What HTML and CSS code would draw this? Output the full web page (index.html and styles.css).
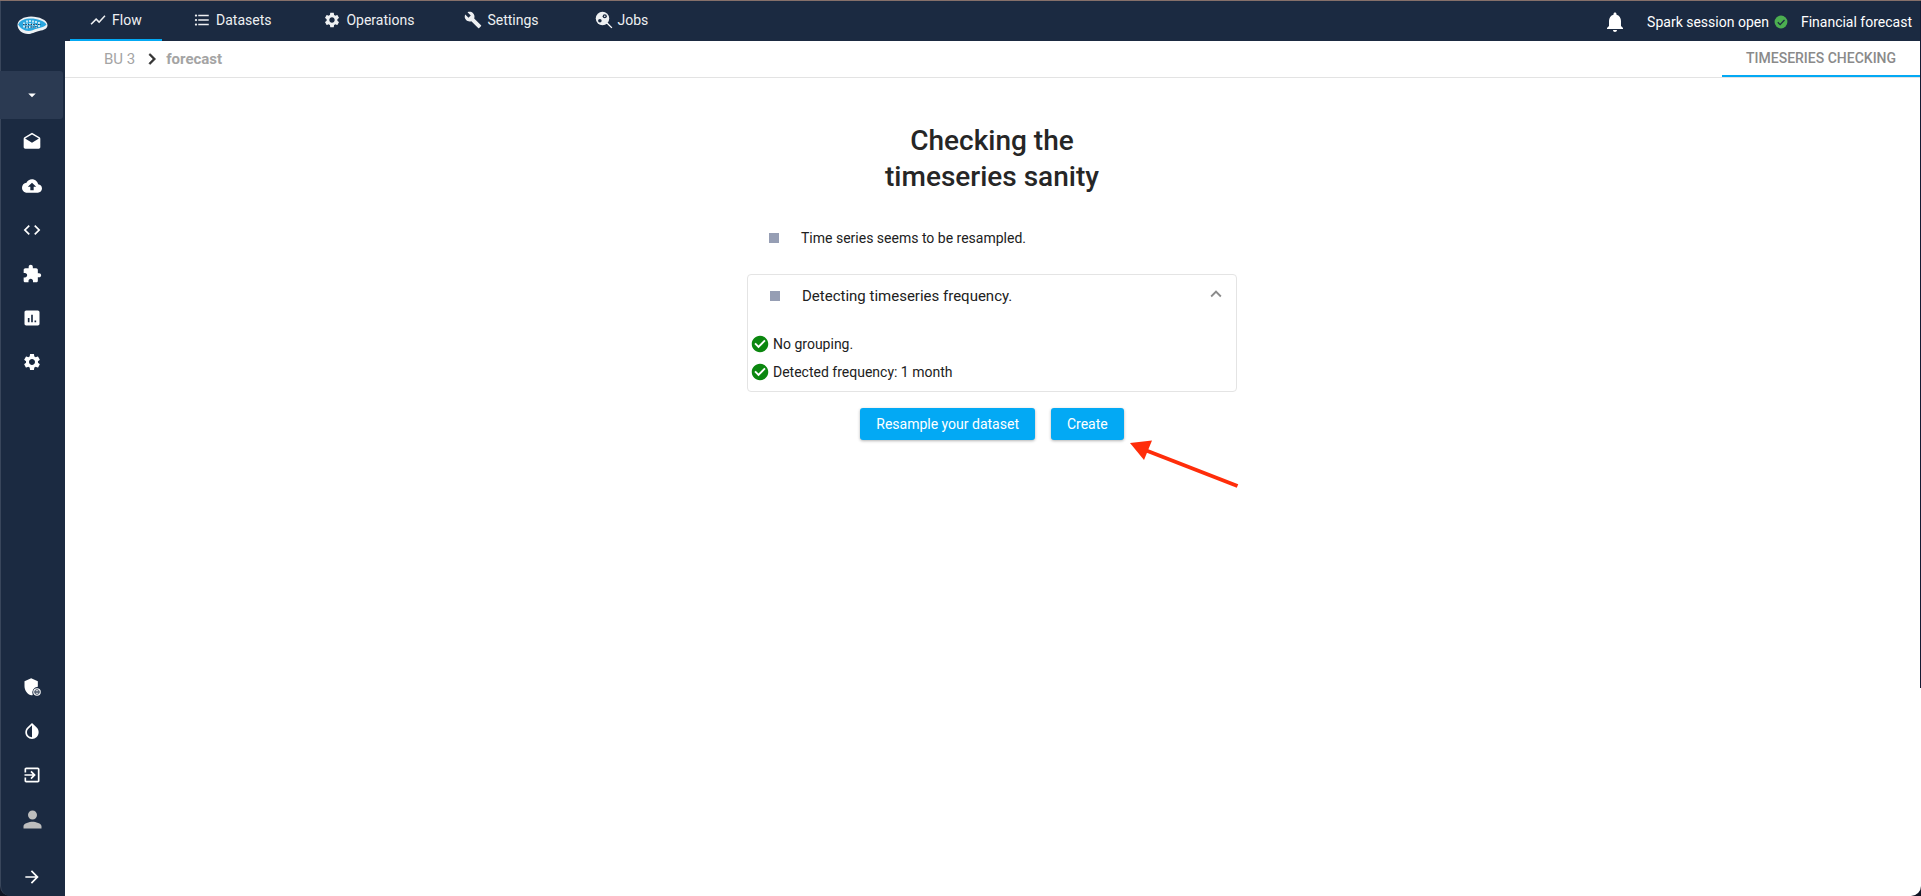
FILE: index.html
```html
<!DOCTYPE html>
<html lang="en">
<head>
<meta charset="utf-8">
<title>Timeseries checking</title>
<link rel="stylesheet" href="styles.css">
</head>
<body>
<div class="window">
  <div class="topline"></div>
  <div class="app">
    <aside class="sidebar">
      <div class="logo">
        <svg width="31" height="19" viewBox="0 0 31 19">
          <path d="M.5 9C.5 4 7 .5 14 .5c8 0 16.500 3.500 16.500 8.500 0 3.500-3 5-8.500 6-5 1-7 3-11 3-5.500 0-10.500-4-10.500-9z" fill="#eef2f5"/>
          <path d="M1.500 8C2.500 4.500 8 2.500 14 2.500c6 0 13.500 2.500 15.500 6-2 2.500-5 3-9 4-4 1-6 2.500-9 2.500-4 0-9-3-10.500-7z" fill="#2ba6de"/>
          <path d="M7 6.500v5M10 4.500v8M13 4v9M16 4.500v7M19 5v7M22 6v5" stroke="#fff" stroke-width="1.400" stroke-dasharray="2 1"/>
          <path d="M6 8.500h18M8 11h13" stroke="#1b2a41" stroke-width=".8" stroke-dasharray="1.500 1"/>
        </svg>
      </div>
      <div class="side-active">
        <svg class="ic18" viewBox="0 0 24 24"><path d="M7 10l5 5 5-5z"/></svg>
      </div>
      <nav class="side-group">
        <div class="side-item"><svg class="ic20" viewBox="0 0 24 24"><path d="M21.990 8c0-.72-.37-1.350-.94-1.700L12 1 2.950 6.300C2.380 6.650 2 7.280 2 8v10c0 1.100.9 2 2 2h16c1.100 0 2-.9 2-2l-.01-10zM12 13L3.740 7.840 12 3l8.260 4.840L12 13z"/></svg></div>
        <div class="side-item"><svg class="ic20" viewBox="0 0 24 24"><path d="M19.350 10.040C18.670 6.590 15.640 4 12 4 9.110 4 6.600 5.640 5.350 8.040 2.340 8.360 0 10.910 0 14c0 3.310 2.690 6 6 6h13c2.760 0 5-2.240 5-5 0-2.640-2.050-4.780-4.650-4.960zM14 13v4h-4v-4H7l5-5 5 5h-3z"/></svg></div>
        <div class="side-item"><svg class="ic20" viewBox="0 0 24 24"><path d="M9.400 16.600L4.800 12l4.600-4.600L8 6l-6 6 6 6 1.400-1.400zm5.200 0l4.600-4.600-4.600-4.600L16 6l6 6-6 6-1.400-1.400z"/></svg></div>
        <div class="side-item"><svg class="ic20" viewBox="0 0 24 24"><path d="M20.500 11H19V7c0-1.100-.9-2-2-2h-4V3.500C13 2.120 11.880 1 10.500 1S8 2.120 8 3.500V5H4c-1.100 0-1.990.9-1.990 2v3.800H3.500c1.490 0 2.700 1.210 2.700 2.700s-1.210 2.700-2.700 2.700H2V20c0 1.100.9 2 2 2h3.800v-1.500c0-1.490 1.210-2.700 2.700-2.700 1.490 0 2.700 1.210 2.700 2.700V22H17c1.100 0 2-.9 2-2v-4h1.500c1.380 0 2.500-1.120 2.500-2.500S21.880 11 20.500 11z"/></svg></div>
        <div class="side-item"><svg class="ic20" viewBox="0 0 24 24"><path d="M19 3H5c-1.100 0-2 .9-2 2v14c0 1.100.9 2 2 2h14c1.100 0 2-.9 2-2V5c0-1.100-.9-2-2-2zM9 17H7v-5h2v5zm4 0h-2V8h2v9zm4 0h-2v-2h2v2z"/></svg></div>
        <div class="side-item"><svg class="ic20" viewBox="0 0 24 24"><path d="M19.140 12.940c.04-.3.06-.61.06-.94 0-.32-.02-.64-.07-.94l2.030-1.580c.18-.14.23-.41.12-.61l-1.920-3.320c-.12-.22-.37-.29-.59-.22l-2.390.96c-.5-.38-1.030-.7-1.620-.94l-.36-2.540c-.04-.24-.24-.41-.48-.41h-3.840c-.24 0-.43.17-.47.41l-.36 2.540c-.59.24-1.130.57-1.620.94l-2.390-.96c-.22-.08-.47 0-.59.22L2.740 8.870c-.12.21-.08.47.12.61l2.030 1.580c-.05.3-.09.63-.09.94s.02.64.07.94l-2.030 1.580c-.18.14-.23.41-.12.61l1.920 3.320c.12.22.37.29.59.22l2.390-.96c.5.38 1.030.7 1.620.94l.36 2.540c.05.24.24.41.48.41h3.840c.24 0 .44-.17.47-.41l.36-2.540c.59-.24 1.130-.56 1.620-.94l2.390.96c.22.08.47 0 .59-.22l1.920-3.320c.12-.22.07-.47-.12-.61l-2.010-1.580zM12 15.600c-1.980 0-3.600-1.620-3.600-3.600s1.620-3.600 3.600-3.600 3.600 1.620 3.600 3.600-1.620 3.600-3.600 3.600z"/></svg></div>
      </nav>
      <nav class="side-group side-bottom">
        <div class="side-item"><svg class="ic20" viewBox="0 0 24 24"><path d="M11 1.500L3 5v6c0 5 3.400 9.800 8.500 11 .5-.1 1-.3 1.400-.5A7 7 0 0 1 19 11.700V5l-8-3.500z"/><circle cx="18" cy="18" r="4.500" fill="#fff"/><path d="M15.500 18h5" stroke="#1b2a41" stroke-width="1.500"/><circle cx="18" cy="18" r="2.800" fill="none" stroke="#1b2a41" stroke-width="1"/></svg></div>
        <div class="side-item"><svg class="ic20" viewBox="0 0 24 24"><path d="M17.660 7.930L12 2.270 6.340 7.930c-3.120 3.120-3.120 8.190 0 11.310C7.900 20.800 9.950 21.580 12 21.580s4.100-.78 5.660-2.340c3.120-3.120 3.120-8.190 0-11.310zM12 19.590c-1.600 0-3.110-.62-4.240-1.760C6.620 16.690 6 15.190 6 13.590s.62-3.110 1.760-4.240L12 5.100v14.490z"/></svg></div>
        <div class="side-item"><svg class="ic20" viewBox="0 0 24 24"><path d="M10.090 15.590L11.500 17l5-5-5-5-1.410 1.410L12.670 11H3v2h9.670l-2.580 2.590zM19 3H5c-1.110 0-2 .9-2 2v4h2V5h14v14H5v-4H3v4c0 1.100.89 2 2 2h14c1.100 0 2-.9 2-2V5c0-1.100-.9-2-2-2z"/></svg></div>
        <div class="side-item"><svg class="ic-person" viewBox="0 0 24 24"><path d="M12 12c2.210 0 4-1.790 4-4s-1.790-4-4-4-4 1.790-4 4 1.790 4 4 4zm0 2c-2.670 0-8 1.340-8 4v2h16v-2c0-2.660-5.330-4-8-4z"/></svg></div>
        <div class="side-item side-collapse"><svg class="ic20" viewBox="0 0 24 24"><path d="M12 4l-1.410 1.410L16.170 11H4v2h12.170l-5.580 5.590L12 20l8-8z"/></svg></div>
      </nav>
    </aside>
    <div class="main">
      <header class="topbar">
        <nav class="tabs">
          <a class="tab tab-flow active"><svg class="ic18" viewBox="0 0 24 24"><path d="M3.500 18.490l6-6.010 4 4L22 6.920l-1.410-1.410-7.090 7.970-4-4L2 16.990z"/></svg>Flow</a>
          <a class="tab tab-datasets"><svg class="ic18" viewBox="0 0 24 24"><path d="M4 10.500c-.83 0-1.500.67-1.500 1.500s.67 1.500 1.500 1.500 1.500-.67 1.500-1.500-.67-1.500-1.500-1.500zm0-6c-.83 0-1.500.67-1.500 1.500S3.170 7.500 4 7.500 5.500 6.830 5.500 6 4.830 4.500 4 4.500zm0 12c-.83 0-1.500.68-1.500 1.500s.68 1.500 1.500 1.500 1.500-.68 1.500-1.500-.67-1.500-1.500-1.500zM7 19h14v-2H7v2zm0-6h14v-2H7v2zm0-8v2h14V5H7z"/></svg>Datasets</a>
          <a class="tab tab-ops"><svg class="ic18" viewBox="0 0 24 24"><path d="M19.140 12.940c.04-.3.06-.61.06-.94 0-.32-.02-.64-.07-.94l2.030-1.580c.18-.14.23-.41.12-.61l-1.920-3.320c-.12-.22-.37-.29-.59-.22l-2.390.96c-.5-.38-1.030-.7-1.620-.94l-.36-2.540c-.04-.24-.24-.41-.48-.41h-3.840c-.24 0-.43.17-.47.41l-.36 2.540c-.59.24-1.130.57-1.620.94l-2.390-.96c-.22-.08-.47 0-.59.22L2.740 8.870c-.12.21-.08.47.12.61l2.030 1.580c-.05.3-.09.63-.09.94s.02.64.07.94l-2.030 1.580c-.18.14-.23.41-.12.61l1.920 3.320c.12.22.37.29.59.22l2.390-.96c.5.38 1.030.7 1.620.94l.36 2.540c.05.24.24.41.48.41h3.840c.24 0 .44-.17.47-.41l.36-2.540c.59-.24 1.130-.56 1.620-.94l2.390.96c.22.08.47 0 .59-.22l1.920-3.320c.12-.22.07-.47-.12-.61l-2.010-1.580zM12 15.600c-1.980 0-3.600-1.620-3.600-3.600s1.620-3.600 3.600-3.600 3.600 1.620 3.600 3.600-1.620 3.600-3.600 3.600z"/></svg>Operations</a>
          <a class="tab tab-settings"><svg class="ic18" viewBox="0 0 24 24"><path d="M22.700 19l-9.100-9.100c.9-2.300.4-5-1.500-6.900-2-2-5-2.400-7.400-1.300L9 6 6 9 1.600 4.700C.4 7.100.9 10.100 2.900 12.100c1.900 1.900 4.600 2.400 6.900 1.500l9.100 9.100c.4.4 1 .4 1.400 0l2.300-2.300c.5-.4.500-1.100.1-1.400z"/></svg>Settings</a>
          <a class="tab tab-jobs"><svg class="ic18" viewBox="0 0 24 24"><circle cx="10" cy="10" r="9"/><path d="M16 16l6.500 6.500" stroke="#fff" stroke-width="1.800"/><circle cx="13" cy="7" r="2.800" fill="#1b2a41"/><circle cx="6.500" cy="13" r="2.400" fill="#1b2a41"/><circle cx="13" cy="7" r="1" fill="#fff"/></svg>Jobs</a>
        </nav>
        <div class="status">
          <svg class="ic-bell" viewBox="0 0 24 24"><path d="M12 22c1.100 0 2-.9 2-2h-4c0 1.100.89 2 2 2zm6-6v-5c0-3.070-1.640-5.640-4.500-6.320V4c0-.83-.67-1.500-1.500-1.500s-1.500.67-1.500 1.500v.68C7.630 5.360 6 7.920 6 11v5l-2 2v1h16v-1l-2-2z"/></svg>
          <span class="spark">Spark session open</span>
          <svg class="ic-ok" viewBox="0 0 24 24"><circle cx="12" cy="12" r="11" fill="#4caf50"/><path d="M6.500 12.500l4 4 7.500-8" fill="none" stroke="#1b2a41" stroke-width="2.200"/></svg>
          <span class="project">Financial forecast</span>
        </div>
      </header>
      <div class="subbar">
        <div class="crumbs">
          <span class="crumb">BU 3</span>
          <svg class="chev" viewBox="0 0 24 24"><path d="M10 6L8.590 7.410 13.170 12l-4.580 4.590L10 18l6-6z" stroke="currentColor" stroke-width=".6"/></svg>
          <span class="crumb crumb-current">forecast</span>
        </div>
        <div class="step-tab">TIMESERIES CHECKING</div>
      </div>
      <main class="content">
        <h1 class="title">Checking the<br>timeseries sanity</h1>
        <div class="check-line">
          <span class="square"></span>
          <span>Time series seems to be resampled.</span>
        </div>
        <section class="card">
          <div class="card-head">
            <span class="square"></span>
            <span class="card-title">Detecting timeseries frequency.</span>
            <svg class="ic-expand" viewBox="0 0 24 24"><path d="M12 8l-6 6 1.410 1.410L12 10.830l4.590 4.580L18 14z"/></svg>
          </div>
          <div class="card-row card-row-first"><svg class="ic-check" viewBox="0 0 24 24"><path d="M12 1C5.930 1 1 5.930 1 12s4.930 11 11 11 11-4.930 11-11S18.070 1 12 1zm-2 16.500L4.500 12l1.800-1.800 3.700 3.700 7.700-7.700 1.800 1.800-9.500 9.500z"/></svg>No grouping.</div>
          <div class="card-row"><svg class="ic-check" viewBox="0 0 24 24"><path d="M12 1C5.930 1 1 5.930 1 12s4.930 11 11 11 11-4.930 11-11S18.070 1 12 1zm-2 16.500L4.500 12l1.800-1.800 3.700 3.700 7.700-7.700 1.800 1.800-9.500 9.500z"/></svg>Detected frequency: 1 month</div>
        </section>
        <div class="actions">
          <button class="btn" type="button">Resample your dataset</button>
          <button class="btn" type="button">Create</button>
        </div>
      </main>
    </div>
  </div>
  <div class="edge-line"></div>
  <svg class="annotation" width="112" height="52" viewBox="0 0 112 52">
    <path d="M109.500 48L17 12" stroke="#ff2d0a" stroke-width="4" fill="none"/>
    <path d="M2 5L24 2.500 16 22z" fill="#ff2d0a"/>
  </svg>
</div>
</body>
</html>
```

FILE: styles.css
```css
* { box-sizing: border-box; }
html, body { margin: 0; height: 100%; }
body {
  background: #0f1524;
  font-family: Roboto, "Liberation Sans", sans-serif;
  overflow: hidden;
}
svg { display: block; fill: currentColor; flex: none; }

.window {
  position: relative;
  width: 1921px;
  height: 896px;
  display: flex;
  flex-direction: column;
}
.topline { height: 1px; background: #86706a; flex: none; }
.app { flex: 1; display: flex; min-height: 0; }

.sidebar {
  width: 65px;
  flex: none;
  display: flex;
  flex-direction: column;
  background: #1b2a41;
  border-left: 1px solid #39465b;
  border-bottom-left-radius: 10px;
  color: #fff;
}
.logo { height: 70px; display: flex; justify-content: center; padding: 15px 2px 0 0; }
.side-active {
  height: 48px;
  width: 63px;
  margin-left: -1px;
  background: #2b3a52;
  border-radius: 0 3px 3px 0;
  display: flex;
  align-items: center;
  justify-content: center;
}
.side-group { display: flex; flex-direction: column; margin-top: 1px; }
.side-item { height: 44px; display: flex; align-items: center; justify-content: center; padding-right: 2px; }
.side-bottom { margin-top: auto; }
.side-collapse { height: 39px; margin-top: 16px; }
.ic18 { width: 18px; height: 18px; }
.ic20 { width: 20px; height: 20px; }
.ic-person { width: 27px; height: 27px; color: #bdbdbd; }

.main { flex: 1; display: flex; flex-direction: column; background: #fff; min-width: 0; border-bottom-right-radius: 10px; }

.topbar {
  height: 40px;
  flex: none;
  display: flex;
  justify-content: space-between;
  background: #1b2a41;
  color: #fff;
  font-size: 14px;
}
.tabs { display: flex; padding-left: 5px; }
.tab {
  display: flex;
  align-items: center;
  gap: 5px;
  height: 40px;
  color: #eef0f2;
  border-bottom: 2px solid transparent;
}
.tab-flow { width: 92px; padding-left: 19px; }
.tab.active { border-bottom-color: #03a9f4; }
.tab-datasets { margin-left: 31px; }
.tab-ops { margin-left: 52px; }
.tab-settings { margin-left: 50px; }
.tab-jobs { margin-left: 56px; }

.status { display: flex; align-items: center; padding: 1px 9px 0 0; }
.ic-bell { width: 24px; height: 24px; margin-right: 20px; }
.ic-ok { width: 14px; height: 14px; margin: 0 13px 0 5px; }

.subbar {
  height: 37px;
  flex: none;
  display: flex;
  justify-content: space-between;
  border-bottom: 1px solid #e3e3e3;
}
.crumbs { display: flex; align-items: center; padding-left: 39px; font-size: 15px; color: #a4a4a4; }
.crumb-current { font-weight: 700; }
.chev { width: 22px; height: 22px; margin: 0 3px 0 6px; color: #333; }
.step-tab {
  width: 198px;
  height: 36px;
  margin-right: 1px;
  padding-left: 24px;
  line-height: 35px;
  font-size: 14px;
  font-weight: 500;
  color: #8a8a8a;
  border-bottom: 2px solid #03a9f4;
  white-space: nowrap;
}

.content { flex: 1; display: flex; flex-direction: column; align-items: center; color: #212121; padding: 45px 2px 0 0; }
.title {
  margin: 0;
  font-size: 28px;
  font-weight: 500;
  line-height: 36px;
  text-align: center;
  color: #262626;
}
.check-line {
  width: 490px;
  display: flex;
  align-items: center;
  margin-top: 31px;
  height: 24px;
  padding-left: 22px;
  font-size: 14px;
}
.square { width: 10px; height: 10px; background: #969eb4; flex: none; margin-right: 22px; }
.card {
  width: 490px;
  height: 118px;
  margin-top: 24px;
  border: 1px solid #e4e4e4;
  border-radius: 4px;
  font-size: 14px;
}
.card-head { display: flex; align-items: center; height: 42px; padding: 0 9px 0 22px; }
.card-title { flex: 1; font-size: 15px; }
.ic-expand { width: 22px; height: 22px; color: #8b8b8b; margin-top: -4px; }
.card-row { display: flex; align-items: center; gap: 4px; height: 28px; padding-left: 3px; }
.card-row-first { margin-top: 13px; }
.ic-check { width: 18px; height: 18px; color: #0b870f; }

.actions { display: flex; gap: 16px; margin-top: 16px; }
.btn {
  height: 32px;
  padding: 0 16px;
  border: 0;
  border-radius: 3px;
  background: #03a9f4;
  color: #fff;
  font: 400 14px Roboto, "Liberation Sans", sans-serif;
  box-shadow: 0 1px 3px rgba(0,0,0,.3);
}

.edge-line { position: absolute; left: 1920px; top: 1px; width: 1px; height: 687px; background: #141b33; }
.annotation { position: absolute; left: 1128px; top: 438px; }
```
